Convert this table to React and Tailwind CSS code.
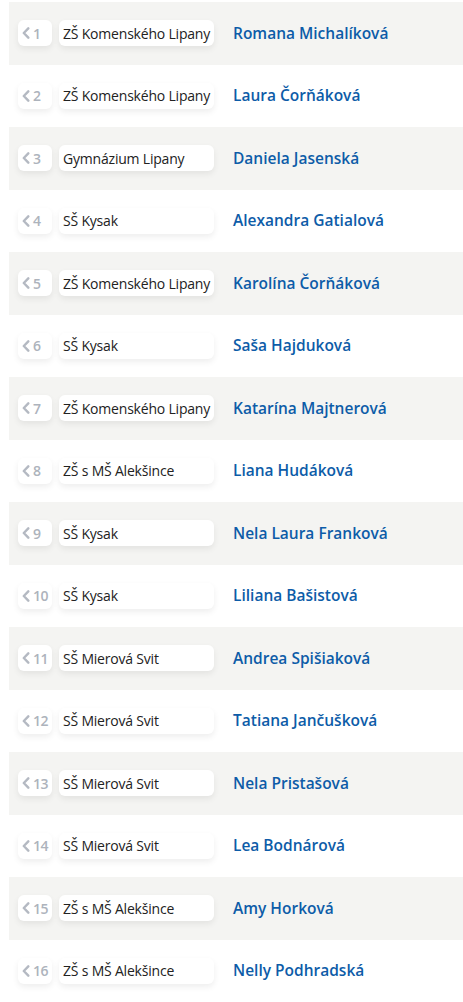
import React from 'react';

const rows = [
    { n: 1, school: 'ZŠ Komenského Lipany', name: 'Romana Michalíková' },
    { n: 2, school: 'ZŠ Komenského Lipany', name: 'Laura Čorňáková' },
    { n: 3, school: 'Gymnázium Lipany', name: 'Daniela Jasenská' },
    { n: 4, school: 'SŠ Kysak', name: 'Alexandra Gatialová' },
    { n: 5, school: 'ZŠ Komenského Lipany', name: 'Karolína Čorňáková' },
    { n: 6, school: 'SŠ Kysak', name: 'Saša Hajduková' },
    { n: 7, school: 'ZŠ Komenského Lipany', name: 'Katarína Majtnerová' },
    { n: 8, school: 'ZŠ s MŠ Alekšince', name: 'Liana Hudáková' },
    { n: 9, school: 'SŠ Kysak', name: 'Nela Laura Franková' },
    { n: 10, school: 'SŠ Kysak', name: 'Liliana Bašistová' },
    { n: 11, school: 'SŠ Mierová Svit', name: 'Andrea Spišiaková' },
    { n: 12, school: 'SŠ Mierová Svit', name: 'Tatiana Jančušková' },
    { n: 13, school: 'SŠ Mierová Svit', name: 'Nela Pristašová' },
    { n: 14, school: 'SŠ Mierová Svit', name: 'Lea Bodnárová' },
    { n: 15, school: 'ZŠ s MŠ Alekšince', name: 'Amy Horková' },
    { n: 16, school: 'ZŠ s MŠ Alekšince', name: 'Nelly Podhradská' },
];

const Chevron = () => (
    <svg width="8" height="12" viewBox="0 0 8 12" className="shrink-0">
        <path d="M6.3 1.3 L1.8 6 L6.3 10.7" fill="none" stroke="#b4b9c2" strokeWidth="2.4" strokeLinecap="round" strokeLinejoin="round" />
    </svg>
);

const App = () => {
    return (
        <div className="w-[463px] min-h-[1002px] bg-white pt-[2px] pl-[9px]" style={{ fontFamily: '"Open Sans", "Noto Sans", sans-serif' }}>
            {rows.map((r) => (
                <div
                    key={r.n}
                    className={`h-[62.5px] flex items-center pl-[9px] ${r.n % 2 === 1 ? 'bg-[#f4f4f2]' : 'bg-white'}`}
                >
                    <div className="w-[34px] h-[26px] bg-white rounded-[6px] shadow-[0_3px_6px_rgba(0,0,0,0.07)] flex items-center pl-[4px] gap-[3px] text-[14px] text-[#adb3bc] font-semibold tracking-[-0.4px]">
                        <Chevron />
                        <span>{r.n}</span>
                    </div>
                    <div className="ml-[7px] w-[155px] h-[26px] bg-white rounded-[6px] shadow-[0_3px_6px_rgba(0,0,0,0.07)] flex items-center pl-[4px] text-[14px] text-[#222] whitespace-nowrap overflow-hidden tracking-[-0.2px]">
                        {r.school}
                    </div>
                    <div className="ml-[19px] text-[15.5px] font-semibold text-[#0d5ca8] whitespace-nowrap">
                        {r.name}
                    </div>
                </div>
            ))}
        </div>
    );
};

export default App;
